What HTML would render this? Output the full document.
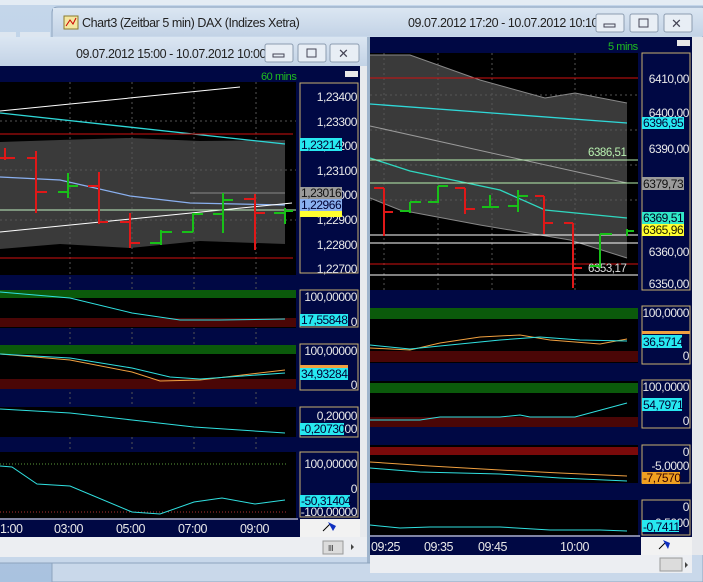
<!DOCTYPE html>
<html><head><meta charset="utf-8"><style>
html,body{margin:0;padding:0;width:703px;height:582px;overflow:hidden;background:#b9cde4}
svg{display:block;font-family:"Liberation Sans",sans-serif}
svg text{letter-spacing:-0.45px}
</style></head><body>
<svg width="703" height="582" viewBox="0 0 703 582" xmlns="http://www.w3.org/2000/svg">
<defs>
<linearGradient id="tb" x1="0" y1="0" x2="0" y2="1"><stop offset="0" stop-color="#dbe6f2"/><stop offset="1" stop-color="#c3d3e6"/></linearGradient>
<linearGradient id="bg" x1="0" y1="0" x2="0" y2="1"><stop offset="0" stop-color="#c4d6ea"/><stop offset="1" stop-color="#a9c2df"/></linearGradient>
</defs>
<rect x="0" y="0" width="703" height="582" fill="url(#bg)"/>
<rect x="0" y="0" width="703" height="5" fill="#e4ecf4"/>
<rect x="0" y="32" width="16" height="6" fill="#dde6f0"/><rect x="20" y="32" width="30" height="6" fill="#dde6f0"/>
<rect x="52" y="563" width="651" height="19" fill="#eef1f5"/>
<line x1="52" y1="563" x2="703" y2="563" stroke="#5a6a7a"/>
<line x1="52" y1="563" x2="52" y2="582" stroke="#7a8aa0"/>
<rect x="61" y="563" width="63" height="14" fill="#d8d8d8" stroke="#999"/>
<path d="M132 563 L136 576 L182 576 L186 563" fill="#fff" stroke="#333"/>
<text x="142" y="570" font-size="11" font-weight="bold" fill="#000">Blatt1</text>

<!-- BACK WINDOW -->
<path d="M58 7 H703 V582 H52 V13 Q52 7 58 7Z" fill="#c9d8ea" stroke="#8da3bd"/>
<rect x="53" y="8" width="650" height="28" fill="url(#tb)"/>
<rect x="64" y="16" width="14" height="13" fill="#f3e6a0" stroke="#8a7a30"/><path d="M66 26 L70 20 L73 24 L76 18" stroke="#c00" fill="none"/>
<text x="82" y="27" font-size="12.5" fill="#222">Chart3 (Zeitbar 5 min)  DAX (Indizes Xetra)</text>
<text x="408" y="27" font-size="12.5" fill="#222">09.07.2012 17:20 - 10.07.2012 10:10</text>
<g fill="#e8eef5" stroke="#8c9cb0"><rect x="596" y="14" width="28" height="18" rx="2"/><rect x="630" y="14" width="28" height="18" rx="2"/><rect x="664" y="14" width="28" height="18" rx="2"/></g>
<rect x="604" y="24" width="11" height="3" fill="none" stroke="#445"/><rect x="639" y="19" width="9" height="8" fill="none" stroke="#445"/>
<text x="671" y="28" font-size="13" fill="#445">✕</text>
<rect x="370" y="37" width="322" height="518" fill="#000844"/>
<rect x="692" y="37" width="11" height="518" fill="#e6e8ec"/>
<rect x="677" y="40" width="13" height="6" fill="#e8e8e8"/>
<text x="608" y="50" font-size="11" fill="#1fbf1f">5 mins</text>
<rect x="370" y="53" width="268" height="237" fill="#000"/>
<polygon points="370,55 410,55 480,80 545,98 575,93 627,103 627,258 570,240 480,225 400,210 370,198" fill="#3a3a3a"/>
<g stroke="#555" stroke-dasharray="2,3"><line x1="384" y1="53" x2="384" y2="290"/><line x1="438" y1="53" x2="438" y2="290"/><line x1="492" y1="53" x2="492" y2="290"/><line x1="575" y1="53" x2="575" y2="290"/>
<line x1="370" y1="95" x2="638" y2="95"/><line x1="370" y1="130" x2="638" y2="130"/><line x1="370" y1="165" x2="638" y2="165"/><line x1="370" y1="200" x2="638" y2="200"/></g>
<polyline points="370,55 410,55 480,80 545,98 575,93 627,103" stroke="#888" fill="none"/>
<polyline points="370,198 400,210 480,225 570,240 627,258" stroke="#888" fill="none"/>
<line x1="370" y1="78" x2="638" y2="78" stroke="#d01010"/>
<line x1="370" y1="264" x2="638" y2="264" stroke="#d01010"/>
<line x1="370" y1="104" x2="627" y2="123" stroke="#2fd8d8" stroke-width="1.3"/>
<line x1="370" y1="126" x2="627" y2="183" stroke="#9a9a9a"/>
<polyline points="370,158 410,171 500,190 545,210 627,218" stroke="#2fd8c0" fill="none" stroke-width="1.3"/>
<line x1="370" y1="160" x2="638" y2="160" stroke="#b8f0b0"/>
<line x1="370" y1="183" x2="638" y2="183" stroke="#b8f0b0"/>
<g stroke="#fff"><line x1="370" y1="235" x2="638" y2="235"/><line x1="370" y1="243" x2="638" y2="243"/><line x1="370" y1="275" x2="638" y2="275"/></g>
<text x="588" y="156" font-size="11.5" fill="#b8f0b0">6386,51</text>
<text x="588" y="272" font-size="11.5" fill="#ddd">6353,17</text>
<g stroke-width="2" fill="none">
<path d="M384 188V236M374 188H384M384 212H393" stroke="#e01818"/>
<path d="M410 202V213M400 211H410M410 202H421" stroke="#18c018"/>
<path d="M438 186V203M428 202H438M438 186H448" stroke="#18c018"/>
<path d="M465 188V214M455 188H465M465 209H475" stroke="#e01818"/>
<path d="M490 195V208M482 207H499" stroke="#18c018"/>
<path d="M518 190V212M508 206H518M518 196H528" stroke="#18c018"/>
<path d="M544 196V234M535 196H544M544 223H553" stroke="#e01818"/>
<path d="M573 223V288M564 223H573M573 268H582" stroke="#e01818"/>
<path d="M600 234V268M590 266H600M600 234H612" stroke="#18c018"/>
<path d="M627 229V236M627 231H634" stroke="#18c018"/>
</g>
<rect x="642" y="53" width="48" height="237" fill="#000844" stroke="#c8b070"/>
<g font-size="12" fill="#e8e8e8" text-anchor="end">
<text x="689" y="83">6410,00</text><text x="689" y="117">6400,00</text><text x="689" y="153">6390,00</text><text x="689" y="256">6360,00</text><text x="689" y="288">6350,00</text></g>
<g font-size="12" text-anchor="start">
<rect x="642" y="117" width="42" height="12" fill="#27e8f0"/><text x="643" y="127" fill="#003">6396,95</text>
<rect x="642" y="177" width="42" height="13" fill="#9a9a9a"/><text x="643" y="188" fill="#111">6379,73</text>
<rect x="642" y="212" width="42" height="12" fill="#30e8c8"/><text x="643" y="222" fill="#002">6369,51</text>
<rect x="642" y="224" width="42" height="12" fill="#ffff30"/><text x="643" y="234" fill="#220">6365,96</text>
</g>
<rect x="370" y="308" width="268" height="55" fill="#000"/><rect x="370" y="308" width="268" height="11" fill="#0b5a0b"/><rect x="370" y="351" width="268" height="11" fill="#4a0606"/>
<polyline points="370,348 410,350 440,343 480,337 520,335 550,340 600,344 627,339" stroke="#f0a040" fill="none"/>
<polyline points="370,345 410,349 450,345 500,340 540,337 580,340 627,341" stroke="#30e0e0" fill="none"/>
<rect x="642" y="306" width="48" height="58" fill="#000844" stroke="#c8b070"/>
<text x="689" y="317" font-size="12" fill="#e8e8e8" text-anchor="end">100,0000</text><text x="689" y="360" font-size="12" fill="#e8e8e8" text-anchor="end">0</text>
<rect x="642" y="331" width="48" height="3" fill="#f0a040"/><rect x="642" y="335" width="40" height="13" fill="#27e8f0"/><text x="643" y="346" font-size="12" fill="#003">36,5714</text>
<rect x="370" y="381" width="268" height="46" fill="#000"/><rect x="370" y="383" width="268" height="10" fill="#0b5a0b"/><rect x="370" y="417" width="268" height="10" fill="#4a0606"/>
<polyline points="370,420 420,420 440,417 500,417 520,415 530,417 570,417 575,417 627,403" stroke="#30e0e0" fill="none"/>
<rect x="642" y="380" width="48" height="48" fill="#000844" stroke="#c8b070"/>
<text x="689" y="391" font-size="12" fill="#e8e8e8" text-anchor="end">100,0000</text><text x="689" y="425" font-size="12" fill="#e8e8e8" text-anchor="end">0</text>
<rect x="642" y="398" width="40" height="13" fill="#27e8f0"/><text x="643" y="409" font-size="12" fill="#003">54,7971</text>
<rect x="370" y="445" width="268" height="38" fill="#000"/>
<rect x="370" y="447" width="268" height="8" fill="#7a0a0a"/>
<polyline points="370,462 430,466 500,470 560,473 627,476" stroke="#f0a040" fill="none"/>
<polyline points="370,468 420,472 500,474 560,478 627,481" stroke="#30e0e0" fill="none"/>
<rect x="642" y="445" width="48" height="38" fill="#000844" stroke="#c8b070"/>
<text x="689" y="456" font-size="12" fill="#e8e8e8" text-anchor="end">0</text><text x="689" y="470" font-size="12" fill="#e8e8e8" text-anchor="end">-5,0000</text>
<rect x="642" y="472" width="38" height="12" fill="#f0a020"/><text x="643" y="482" font-size="12" fill="#300">-7,7570</text>
<rect x="370" y="500" width="268" height="35" fill="#000"/>
<polyline points="370,525 400,528 430,527 500,527 550,530 600,530 627,531" stroke="#30e0e0" fill="none"/>
<rect x="642" y="500" width="48" height="35" fill="#000844" stroke="#c8b070"/>
<text x="689" y="511" font-size="12" fill="#e8e8e8" text-anchor="end">0</text><text x="689" y="527" font-size="12" fill="#e8e8e8" text-anchor="end">-0,5000</text>
<rect x="642" y="520" width="37" height="12" fill="#27e8f0"/><text x="643" y="531" font-size="12" fill="#003">-0,7411</text>
<line x1="370" y1="536" x2="640" y2="536" stroke="#fff"/>
<g font-size="12.5" fill="#e8e8e8"><text x="371" y="551">09:25</text><text x="424" y="551">09:35</text><text x="478" y="551">09:45</text><text x="560" y="551">10:00</text></g>
<rect x="641" y="537" width="51" height="18" fill="#f2f2f2"/>
<path d="M659 549 L666 542" stroke="#000"/><path d="M663 540 L670 543 L668 549 Z" fill="#1030c0"/>
<rect x="370" y="555" width="322" height="18" fill="#eceef2"/>
<rect x="660" y="558" width="22" height="13" fill="#dcdcdc" stroke="#999"/>
<path d="M685 562 L688 565 L685 568Z" fill="#444"/>

<!-- FRONT WINDOW -->
<rect x="0" y="37" width="370" height="526" fill="#c7d7ea"/>
<rect x="0" y="37" width="367" height="29" fill="url(#tb)"/>
<text x="76" y="58" font-size="12.5" fill="#222">09.07.2012 15:00 - 10.07.2012 10:00</text>
<g fill="#e8eef5" stroke="#8c9cb0"><rect x="265" y="44" width="28" height="18" rx="2"/><rect x="298" y="44" width="28" height="18" rx="2"/><rect x="330" y="44" width="29" height="18" rx="2"/></g>
<rect x="273" y="54" width="11" height="3" fill="none" stroke="#445"/><rect x="307" y="49" width="9" height="8" fill="none" stroke="#445"/>
<text x="338" y="58" font-size="13" fill="#445">✕</text>
<rect x="0" y="66" width="360" height="471" fill="#000844"/>
<rect x="360" y="66" width="7" height="471" fill="#e8eaee"/>
<rect x="345" y="71" width="13" height="6" fill="#e8e8e8"/>
<text x="261" y="80" font-size="11" fill="#1fbf1f">60 mins</text>
<rect x="0" y="82" width="296" height="193" fill="#000"/>
<polygon points="0,142 60,140 130,138 200,141 285,140 285,244 200,241 130,248 60,244 0,249" fill="#3a3a3a"/>
<g stroke="#555" stroke-dasharray="2,3"><line x1="70" y1="82" x2="70" y2="518"/><line x1="132" y1="82" x2="132" y2="518"/><line x1="194" y1="82" x2="194" y2="518"/><line x1="256" y1="82" x2="256" y2="518"/>
<line x1="0" y1="121" x2="296" y2="121"/><line x1="0" y1="170" x2="296" y2="170"/><line x1="0" y1="220" x2="296" y2="220"/></g>
<line x1="0" y1="111" x2="240" y2="87" stroke="#fff"/>
<line x1="0" y1="113" x2="285" y2="144" stroke="#2fd8d8" stroke-width="1.3"/>
<line x1="0" y1="134" x2="293" y2="134" stroke="#d01010"/>
<line x1="0" y1="258" x2="293" y2="258" stroke="#d01010"/>
<polyline points="0,177 60,180 130,196 190,203 285,205" stroke="#8ab0f0" fill="none" stroke-width="1.2"/>
<line x1="0" y1="232" x2="292" y2="203" stroke="#fff"/>
<line x1="190" y1="193" x2="285" y2="193" stroke="#888"/>
<line x1="0" y1="210" x2="296" y2="210" stroke="#c0f0c0"/>
<g stroke-width="2" fill="none">
<path d="M5 148V160M0 158H15" stroke="#e01818"/>
<path d="M36 151V213M27 158H36M36 192H47" stroke="#e01818"/>
<path d="M68 173V198M58 192H68M68 186H78" stroke="#18c018"/>
<path d="M99 172V224M88 186H99M99 222H108" stroke="#e01818"/>
<path d="M130 213V248M120 222H130M130 243H140" stroke="#e01818"/>
<path d="M161 230V245M150 243H161M161 232H172" stroke="#18c018"/>
<path d="M193 213V232M182 232H193M193 214H203" stroke="#18c018"/>
<path d="M223 193V233M213 214H223M223 200H233" stroke="#18c018"/>
<path d="M255 194V250M244 199H255M255 213H265" stroke="#e01818"/>
<path d="M285 208V224M274 213H285M285 211H293" stroke="#18c018"/>
</g>
<rect x="300" y="83" width="58" height="190" fill="#000844" stroke="#c8b070"/>
<g font-size="12" fill="#e8e8e8" text-anchor="end">
<text x="357" y="101">1,23400</text><text x="357" y="126">1,23300</text><text x="357" y="150">1,23200</text><text x="357" y="175">1,23100</text><text x="357" y="199">1,23000</text><text x="357" y="224">1,22900</text><text x="357" y="249">1,22800</text><text x="357" y="273">1,22700</text></g>
<g font-size="12">
<rect x="300" y="138" width="42" height="13" fill="#27e8f0"/><text x="301" y="149" fill="#003">1,23214</text>
<rect x="300" y="187" width="42" height="12" fill="#9a9a9a"/><text x="301" y="197" fill="#111">1,23016</text>
<rect x="300" y="211" width="42" height="6" fill="#ffff30"/>
<rect x="300" y="199" width="42" height="12" fill="#8ab0f0"/><text x="301" y="209" fill="#003">1,22966</text>
</g>
<rect x="0" y="290" width="296" height="38" fill="#000"/><rect x="0" y="290" width="296" height="8" fill="#0b5a0b"/><rect x="0" y="318" width="296" height="9" fill="#4a0606"/>
<polyline points="0,292 70,298 132,313 180,320 220,320 285,319" stroke="#30e0e0" fill="none"/>
<rect x="300" y="290" width="58" height="37" fill="#000844" stroke="#c8b070"/>
<text x="357" y="301" font-size="12" fill="#e8e8e8" text-anchor="end">100,00000</text><text x="357" y="326" font-size="12" fill="#e8e8e8" text-anchor="end">0</text>
<rect x="300" y="314" width="48" height="12" fill="#27e8f0"/><text x="301" y="324" font-size="12" fill="#003">17,55848</text>
<rect x="0" y="345" width="296" height="44" fill="#000"/><rect x="0" y="345" width="296" height="9" fill="#0b5a0b"/><rect x="0" y="379" width="296" height="10" fill="#4a0606"/>
<polyline points="0,354 70,360 132,372 160,381 200,380 285,370" stroke="#f0a040" fill="none"/>
<polyline points="0,354 70,358 132,368 170,377 200,379 285,373" stroke="#30e0e0" fill="none"/>
<rect x="300" y="344" width="58" height="46" fill="#000844" stroke="#c8b070"/>
<text x="357" y="355" font-size="12" fill="#e8e8e8" text-anchor="end">100,00000</text><text x="357" y="389" font-size="12" fill="#e8e8e8" text-anchor="end">0</text>
<rect x="300" y="365" width="48" height="3" fill="#f0a040"/><rect x="300" y="368" width="48" height="12" fill="#27e8f0"/><text x="301" y="378" font-size="12" fill="#003">34,93284</text>
<rect x="0" y="407" width="296" height="30" fill="#000"/>
<polyline points="0,409 70,413 132,420 194,427 285,433" stroke="#30e0e0" fill="none"/>
<rect x="300" y="407" width="58" height="30" fill="#000844" stroke="#c8b070"/>
<text x="357" y="420" font-size="12" fill="#e8e8e8" text-anchor="end">0,20000</text>
<text x="357" y="433" font-size="12" fill="#e8e8e8" text-anchor="end">00</text>
<rect x="300" y="423" width="44" height="12" fill="#27e8f0"/><text x="301" y="433" font-size="12" fill="#003">-0,20730</text>
<rect x="0" y="452" width="296" height="66" fill="#000"/>
<line x1="0" y1="464" x2="286" y2="464" stroke="#5a9a3a" stroke-dasharray="1,2"/>
<line x1="0" y1="512" x2="286" y2="512" stroke="#b03030" stroke-dasharray="1,2"/>
<polyline points="0,466 12,467 37,484 70,486 132,512 160,514 194,502 222,498 255,504 285,500" stroke="#30e0e0" fill="none"/>
<rect x="300" y="452" width="58" height="65" fill="#000844" stroke="#c8b070"/>
<text x="357" y="468" font-size="12" fill="#e8e8e8" text-anchor="end">100,00000</text><text x="357" y="493" font-size="12" fill="#e8e8e8" text-anchor="end">0</text>
<rect x="300" y="495" width="50" height="12" fill="#27e8f0"/><text x="301" y="505" font-size="12" fill="#003">-50,31404</text>
<text x="357" y="516" font-size="12" fill="#e8e8e8" text-anchor="end">-100,00000</text>
<line x1="0" y1="519" x2="298" y2="519" stroke="#fff"/>
<g font-size="12.5" fill="#e8e8e8"><text x="0" y="533">1:00</text><text x="54" y="533">03:00</text><text x="116" y="533">05:00</text><text x="178" y="533">07:00</text><text x="240" y="533">09:00</text></g>
<rect x="300" y="519" width="60" height="18" fill="#f2f2f2"/>
<path d="M323 531 L330 524" stroke="#000"/><path d="M328 522 L336 526 L333 531 Z" fill="#1030c0"/>
<rect x="0" y="537" width="367" height="20" fill="#eceef2"/>
<rect x="323" y="541" width="20" height="13" fill="#dcdcdc" stroke="#999"/><text x="328" y="551" font-size="8" fill="#333">III</text>
<path d="M351 544 L354 547 L351 550Z" fill="#444"/>
<rect x="367" y="37" width="3" height="526" fill="#9fb4cc"/>
<line x1="0" y1="563" x2="370" y2="563" stroke="#8da3bd"/>
</svg>
</body></html>
